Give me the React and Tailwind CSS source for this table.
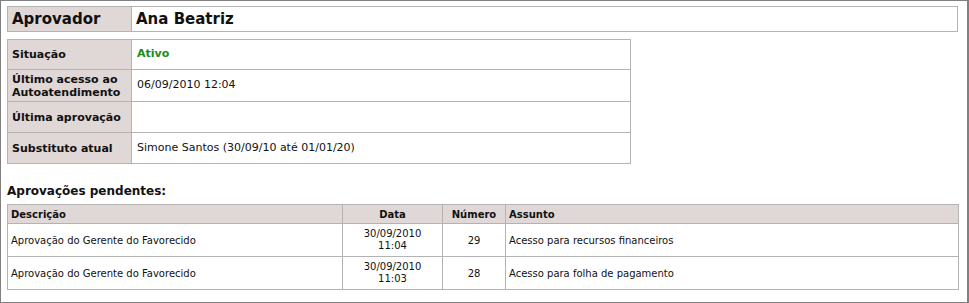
const pendentes = [
  { descricao: 'Aprovação do Gerente do Favorecido', data: '30/09/2010', hora: '11:04', numero: 29, assunto: 'Acesso para recursos financeiros' },
  { descricao: 'Aprovação do Gerente do Favorecido', data: '30/09/2010', hora: '11:03', numero: 28, assunto: 'Acesso para folha de pagamento' },
];

const info = [
  { label: 'Situação', value: <span className="font-bold text-[#1e8a1e]">Ativo</span>, h: 'h-[30px]' },
  { label: <>Último acesso ao<br />Autoatendimento</>, value: '06/09/2010 12:04', h: 'h-[32px]' },
  { label: 'Última aprovação', value: '', h: 'h-[31px]' },
  { label: 'Substituto atual', value: 'Simone Santos (30/09/10 até 01/01/20)', h: 'h-[31px]' },
];

export default function App() {
  return (
    <div className="w-[969px] h-[303px] bg-white border border-r-2 border-[#808080] pt-[5px] pl-[6px] text-[#111] font-['DejaVu_Sans','Liberation_Sans',sans-serif]">
      {/* Aprovador */}
      <table className="w-[951px] border-collapse">
        <tbody>
          <tr className="h-[25px]">
            <td className="w-[124px] bg-[#e0d7d7] border border-[#b3b3b3] px-[4px] text-[15px] font-bold">Aprovador</td>
            <td className="border border-[#b3b3b3] px-[4px] text-[15px] font-bold">Ana Beatriz</td>
          </tr>
        </tbody>
      </table>

      {/* Dados do aprovador */}
      <table className="mt-[7px] w-[624px] border-collapse">
        <tbody>
          {info.map((row, i) => (
            <tr key={i} className={row.h}>
              <td className="w-[124px] bg-[#e0d7d7] border border-[#b3b3b3] px-[4px] text-[11px] font-bold leading-[13px]">{row.label}</td>
              <td className="border border-[#b3b3b3] px-[5px] text-[11px]">{row.value}</td>
            </tr>
          ))}
        </tbody>
      </table>

      <h3 className="mt-[19px] text-[12px] font-bold leading-[16px]">Aprovações pendentes:</h3>

      {/* Aprovações pendentes */}
      <table className="mt-[5px] w-[952px] border-collapse text-[10px]">
        <thead>
          <tr className="h-[19px] bg-[#e0d7d7]">
            <th className="w-[335px] border border-[#b3b3b3] px-[3px] text-left font-bold">Descrição</th>
            <th className="w-[100px] border border-[#b3b3b3] px-[3px] text-center font-bold">Data</th>
            <th className="w-[63px] border border-[#b3b3b3] px-[3px] text-center font-bold">Número</th>
            <th className="border border-[#b3b3b3] px-[3px] text-left font-bold">Assunto</th>
          </tr>
        </thead>
        <tbody>
          {pendentes.map((p) => (
            <tr key={p.numero} className="h-[33px]">
              <td className="border border-[#b3b3b3] px-[3px]">{p.descricao}</td>
              <td className="border border-[#b3b3b3] px-[3px] text-center leading-[12px]">{p.data}<br />{p.hora}</td>
              <td className="border border-[#b3b3b3] px-[3px] text-center">{p.numero}</td>
              <td className="border border-[#b3b3b3] px-[3px]">{p.assunto}</td>
            </tr>
          ))}
        </tbody>
      </table>
    </div>
  );
}
